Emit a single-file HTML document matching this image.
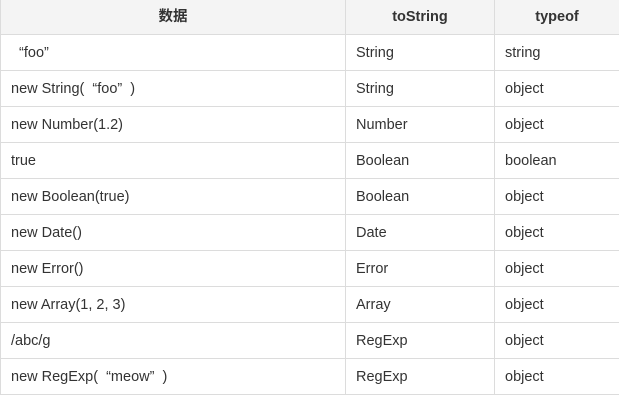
<!DOCTYPE html>
<html><head><meta charset="utf-8"><style>
body{margin:0;background:#fff;}
table{position:absolute;left:0;top:-1px;border-collapse:collapse;width:620px;font-family:"Liberation Sans","Noto Sans CJK SC",sans-serif;font-size:14.5px;color:#333;line-height:18px;}
td,th{border:1px solid #dcdcdc;height:36px;padding:0 0 0 10px;text-align:left;box-sizing:border-box;vertical-align:middle;}
th{background:#f4f4f4;font-weight:bold;text-align:center;padding:0;height:35px;}
th span{display:inline-block;height:18px;line-height:18px;vertical-align:middle;}
col.a{width:345px}col.b{width:149px}
</style></head><body>
<table><colgroup><col class="a"><col class="b"><col></colgroup>
<tr><th><span>数据</span></th><th><span>toString</span></th><th><span>typeof</span></th></tr>
<tr><td>&nbsp;&nbsp;“foo”</td><td>String</td><td>string</td></tr>
<tr><td>new String( &nbsp;“foo” &nbsp;)</td><td>String</td><td>object</td></tr>
<tr><td>new Number(1.2)</td><td>Number</td><td>object</td></tr>
<tr><td>true</td><td>Boolean</td><td>boolean</td></tr>
<tr><td>new Boolean(true)</td><td>Boolean</td><td>object</td></tr>
<tr><td>new Date()</td><td>Date</td><td>object</td></tr>
<tr><td>new Error()</td><td>Error</td><td>object</td></tr>
<tr><td>new Array(1, 2, 3)</td><td>Array</td><td>object</td></tr>
<tr><td>/abc/g</td><td>RegExp</td><td>object</td></tr>
<tr><td>new RegExp( &nbsp;“meow” &nbsp;)</td><td>RegExp</td><td>object</td></tr>
</table>
</body></html>
